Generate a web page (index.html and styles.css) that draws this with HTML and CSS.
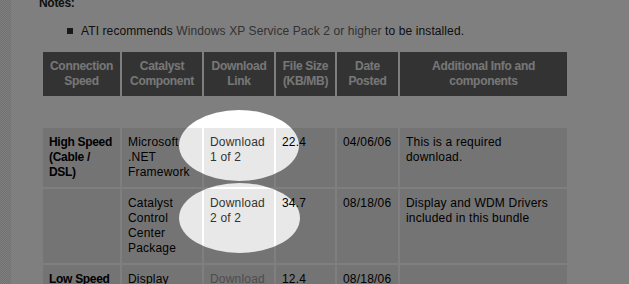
FILE: index.html
```html
<!DOCTYPE html>
<html lang="en">
<head>
<meta charset="utf-8">
<title>Catalyst Downloads</title>
<link rel="stylesheet" href="styles.css">
</head>
<body>
<div class="strip"></div>
<main class="content">
  <p class="notes-title">Notes:</p>
  <ul class="notes">
    <li>ATI recommends <a class="xp" href="#">Windows XP Service Pack 2 or higher</a> to be installed.</li>
  </ul>
  <table class="dl">
    <colgroup>
      <col class="w-speed"><col class="w-comp"><col class="w-link"><col class="w-size"><col class="w-date"><col class="w-info">
    </colgroup>
    <thead>
      <tr>
        <th>Connection Speed</th>
        <th>Catalyst Component</th>
        <th>Download Link</th>
        <th>File Size (KB/MB)</th>
        <th>Date Posted</th>
        <th>Additional Info and components</th>
      </tr>
    </thead>
    <tbody>
      <tr class="spacer"><td colspan="6"></td></tr>
      <tr>
        <td class="speed">High Speed (Cable / DSL)</td>
        <td>Microsoft .NET Framework</td>
        <td><a class="dlink" href="#">Download<br>1 of 2</a></td>
        <td>22.4</td>
        <td>04/06/06</td>
        <td>This is a required download.</td>
      </tr>
      <tr>
        <td></td>
        <td>Catalyst Control Center Package</td>
        <td><a class="dlink" href="#">Download<br>2 of 2</a></td>
        <td>34.7</td>
        <td>08/18/06</td>
        <td>Display and WDM Drivers included in this bundle</td>
      </tr>
      <tr>
        <td class="speed">Low Speed (Dial-up)</td>
        <td>Display Driver</td>
        <td><a class="dlink muted" href="#">Download</a></td>
        <td>12.4</td>
        <td>08/18/06</td>
        <td></td>
      </tr>
    </tbody>
  </table>
</main>
<svg class="dim" width="629" height="284" aria-hidden="true">
  <defs>
    <filter id="soft" x="-10%" y="-10%" width="120%" height="120%">
      <feGaussianBlur stdDeviation="0.6"/>
    </filter>
    <mask id="holes" maskUnits="userSpaceOnUse" x="0" y="0" width="629" height="284">
      <rect width="629" height="284" fill="#fff"/>
      <g filter="url(#soft)" fill="#000">
        <ellipse cx="239" cy="145.5" rx="60" ry="35.5"/>
        <ellipse cx="239.5" cy="218" rx="60.5" ry="35"/>
      </g>
    </mask>
  </defs>
  <rect width="629" height="284" fill="#000" fill-opacity="0.5" mask="url(#holes)"/>
</svg>
</body>
</html>
```
FILE: styles.css
```css
html, body {
  margin: 0;
  padding: 0;
  background: #fff;
}

body {
  display: flex;
  min-height: 100vh;
  overflow: hidden;
  font-family: "Liberation Sans", Arial, sans-serif;
  font-size: 12px;
  line-height: 15px;
  letter-spacing: 0.2px;
  color: #222;
}

.strip {
  flex: 0 0 11px;
  background-color: #fff;
  background-image: repeating-conic-gradient(#e2e2e2 0 25%, #fff 0 50%);
  background-size: 2px 2px;
}

.content {
  flex: 1;
  padding-left: 28px;
}

.notes-title {
  margin: -4px 0 0;
  font-weight: bold;
  letter-spacing: -0.3px;
}

.notes {
  list-style: none;
  margin: 13px 0 0;
  padding: 0 0 0 28px;
  letter-spacing: 0.1px;
}

.notes li::before {
  content: "";
  display: inline-block;
  width: 6px;
  height: 6px;
  margin-right: 8px;
  vertical-align: 1px;
  background: #333;
}

.xp {
  color: #666;
  text-decoration: none;
}

.dl {
  margin: 11px 0 0 2px;
  border-collapse: separate;
  border-spacing: 2px;
  table-layout: fixed;
  width: 528px;
}

.w-speed { width: 77px; }
.w-comp { width: 80px; }
.w-link { width: 70px; }
.w-size { width: 59px; }
.w-date { width: 61px; }
.w-info { width: 167px; }

.dl th {
  background: #666;
  color: #eee;
  font-weight: bold;
  letter-spacing: -0.3px;
  text-align: center;
  vertical-align: top;
  padding: 7px 3px;
}

.dl td {
  background: #e8e8e8;
  color: #000;
  vertical-align: top;
  text-align: left;
  padding: 7px 8px 7px 6px;
}

.dl .spacer td {
  background: transparent;
  height: 28px;
  padding: 0;
}

.dl td.speed {
  font-weight: bold;
  letter-spacing: -0.3px;
}

.dlink {
  color: #333;
  text-decoration: none;
}

.dlink.muted {
  color: #9a9a9a;
}

.dim {
  position: fixed;
  left: 0;
  top: 0;
  pointer-events: none;
}
```
